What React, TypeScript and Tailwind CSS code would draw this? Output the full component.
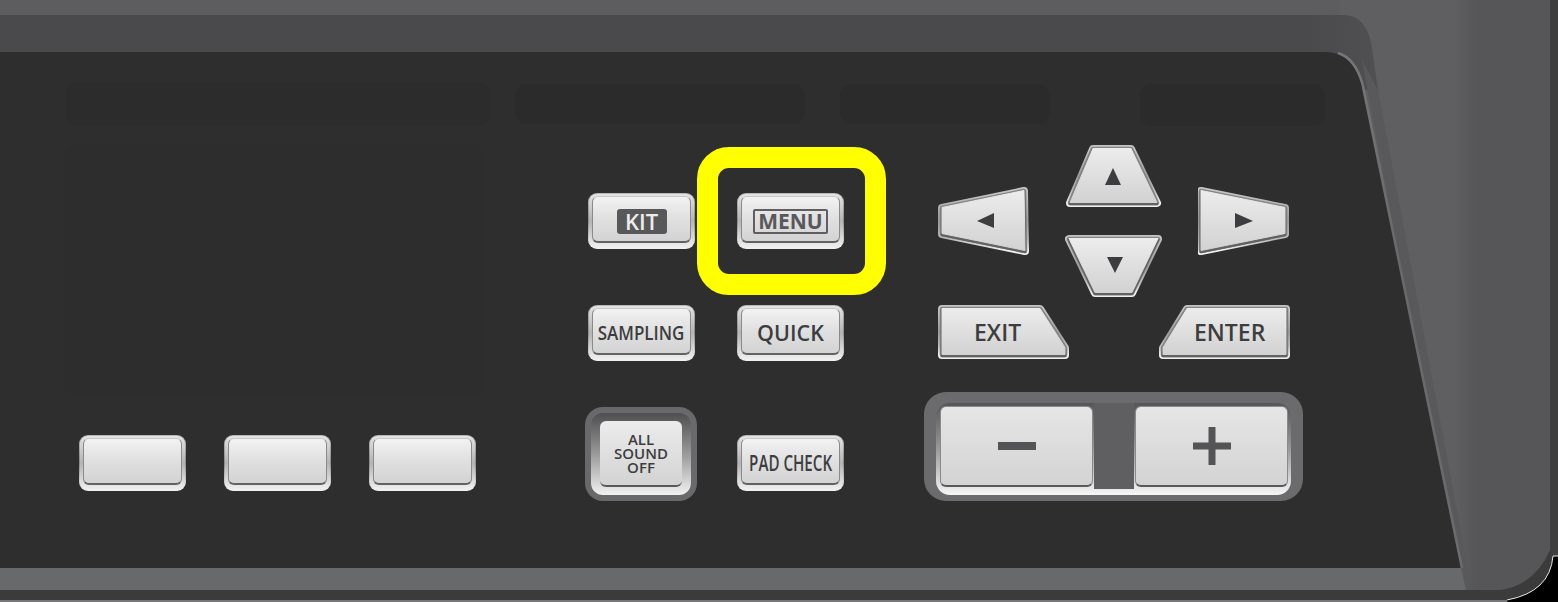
import type { ReactNode } from 'react';

const labelFont = "font-['Open_Sans','Noto_Sans',sans-serif] font-semibold text-[#3d3d40]";

function BodyDrawing() {
  return (
    <svg className="absolute inset-0" width="1558" height="602" viewBox="0 0 1558 602">
      <defs>
        <linearGradient id="keyFace" x1="0" y1="0" x2="0" y2="1">
          <stop offset="0" stopColor="#ececec" />
          <stop offset="0.5" stopColor="#dfdfdf" />
          <stop offset="1" stopColor="#d2d2d3" />
        </linearGradient>
        <linearGradient id="keyRim" x1="0" y1="0" x2="0" y2="1">
          <stop offset="0" stopColor="#c4c4c4" />
          <stop offset="0.5" stopColor="#9c9c9c" />
          <stop offset="0.8" stopColor="#bcbcbc" />
          <stop offset="1" stopColor="#f0f0f0" />
        </linearGradient>
        <linearGradient id="bodySide" x1="0" y1="0" x2="1" y2="0">
          <stop offset="0" stopColor="#5f5f61" />
          <stop offset="0.55" stopColor="#5f5f61" />
          <stop offset="0.65" stopColor="#565658" />
          <stop offset="1" stopColor="#565658" />
        </linearGradient>
        <linearGradient id="topBand" x1="0" y1="0" x2="1" y2="0">
          <stop offset="0" stopColor="#4a4a4c" />
          <stop offset="0.95" stopColor="#4a4a4c" />
          <stop offset="1" stopColor="#505052" />
        </linearGradient>
        <linearGradient id="edgeLight" x1="0" y1="0" x2="0" y2="1">
          <stop offset="0" stopColor="#77777a" />
          <stop offset="0.4" stopColor="#69696b" />
          <stop offset="1" stopColor="#6b6b6d" />
        </linearGradient>
      </defs>
      <rect width="1558" height="602" fill="#5d5d5f" />
      <rect x="1340" width="210" height="602" fill="url(#bodySide)" />
      <rect x="1550" width="8" height="602" fill="#3e3e3f" />
      <path d="M0 15 H1345 Q1365 16 1371 42 L1378 90 L1362 90 H0 Z" fill="url(#topBand)" />
      <path d="M1362 60 L1378 90 L1472 590 H1461 Z" fill="#59595b" />
      <path d="M0 568 H1461 L1466 590 H0 Z" fill="#68696b" />
      <path d="M0 590 H1500 Q1535 585 1550 550 L1553 556 Q1550 592 1507 600 H0 Z" fill="#3b3b3c" />
      <rect y="600" width="1510" height="2" fill="#77777a" />
      <path d="M0 52 H1325 Q1352 52 1362 84 L1461 568 H0 Z" fill="#2f2e2f" />
      <path d="M1338 53 Q1355 58 1362.5 84 L1462 568" fill="none" stroke="url(#edgeLight)" strokeWidth="2.5" />
      <rect x="65" y="82" width="425" height="44" rx="12" fill="#2d2c2d" />
      <rect x="515" y="84" width="290" height="40" rx="12" fill="#2c2b2c" />
      <rect x="840" y="84" width="210" height="40" rx="12" fill="#2c2b2c" />
      <rect x="1140" y="84" width="185" height="42" rx="12" fill="#2c2b2c" />
      <rect x="65" y="145" width="418" height="250" rx="10" fill="#2e2d2e" />
      <path d="M1558 556 H1553 Q1550 592 1507 600 V602 H1558 Z" fill="#000" />
      <path d="M1558 556 H1553 Q1550 592 1507 600" fill="none" stroke="#e8e8e8" strokeWidth="1" />
    </svg>
  );
}

function Key({ children }: { children?: ReactNode }) {
  return (
    <div className="w-[107px] h-[56px] rounded-[9px] bg-gradient-to-b from-[#b8b8b8] via-[#8c8c8c] to-[#f2f2f2] p-[1px]">
      <div className="w-full h-full rounded-[8px] bg-gradient-to-b from-[#e4e4e4] via-[#b4b4b4] to-[#f0f0f0] px-[3px] pt-[2px] pb-[5px]">
        <div className={`w-full h-full rounded-[6px] bg-gradient-to-b from-[#f2f2f2] via-[#e0e0e0] to-[#d3d3d4] border border-[#8a8a8c] border-t-[#c8c8c8] border-b-2 border-b-[#626264] pt-[4px] flex items-center justify-center ${labelFont}`}>
          {children}
        </div>
      </div>
    </div>
  );
}

function ShapeKey({
  width,
  height,
  points,
  triangle,
  children,
}: {
  width: number;
  height: number;
  points: string;
  triangle?: string;
  children?: ReactNode;
}) {
  return (
    <div className="relative shrink-0" style={{ width, height }}>
      <svg className="absolute inset-0" width={width} height={height} viewBox={`0 0 ${width} ${height}`}>
        <polygon points={points} fill="url(#keyRim)" stroke="url(#keyRim)" strokeWidth="8" strokeLinejoin="round" />
        <polygon points={points} fill="#848486" stroke="#848486" strokeWidth="4.5" strokeLinejoin="round" />
        <polygon points={points} fill="#626264" stroke="#626264" strokeWidth="2.5" strokeLinejoin="round" transform="translate(0 1)" />
        <polygon points={points} fill="url(#keyFace)" stroke="url(#keyFace)" strokeWidth="1" strokeLinejoin="round" transform="translate(0 -0.5)" />
        {triangle && <polygon points={triangle} fill="#3d3d40" />}
      </svg>
      {children}
    </div>
  );
}

function SliderFace({ children }: { children: ReactNode }) {
  return (
    <div className="w-[153px] h-[81px] rounded-[6px] bg-gradient-to-b from-[#e6e6e6] to-[#d3d3d4] border border-[#8a8a8c] border-b-2 border-b-[#59595b] flex items-center justify-center">
      {children}
    </div>
  );
}

export default function App() {
  return (
    <div className="relative w-[1558px] h-[602px] overflow-hidden bg-black">
      <BodyDrawing />

      <div className="relative flex pl-[79px] pt-[145px]">
        {/* three unlabelled keys */}
        <div className="flex gap-[38px] pt-[290px] h-fit">
          <Key />
          <Key />
          <Key />
        </div>

        {/* middle block */}
        <div className="ml-[112px] pt-[48px] w-[256px]">
          <div className="grid grid-cols-[107px_107px] gap-x-[42px] gap-y-[56px]">
            <Key>
              <span className="rounded-[3px] bg-[#58585a] w-[50px] h-[25px] flex items-center justify-center text-[22px] leading-none text-[#ececec]">KIT</span>
            </Key>
            <div className="relative">
              <Key>
                <span className="rounded-[2px] border-2 border-[#5f5f62] w-[75px] h-[25px] flex items-center justify-center text-[21px] leading-none font-bold text-[#58585b]">MENU</span>
              </Key>
              <div className="absolute left-[-40px] top-[-46px] w-[189px] h-[148px] rounded-[32px] border-[21px] border-[#ffff00]" />
            </div>
            <Key>
              <span className="inline-block text-[20px] leading-none scale-x-[0.85] whitespace-nowrap">SAMPLING</span>
            </Key>
            <Key>
              <span className="text-[21.5px] leading-none">QUICK</span>
            </Key>
          </div>

          <div className="flex mt-[46px]">
            <div className="-ml-[3px] w-[112px] h-[94px] shrink-0 rounded-[18px] bg-[#69696b] p-[6px]">
              <div className="w-full h-full rounded-[12px] bg-gradient-to-b from-[#4f4f51] via-[#9a9a9a] to-[#f2f2f2] px-[9px] pt-[8px] pb-[8px]">
                <div className={`w-full h-[66px] rounded-[6px] bg-gradient-to-b from-[#ececec] to-[#d3d3d4] border-b-2 border-[#59595b] flex flex-col items-center justify-center text-[15px] leading-[14px] ${labelFont}`}>
                  <span className="block h-[14px]">ALL</span>
                  <span className="block h-[14px]">SOUND</span>
                  <span className="block h-[14px]">OFF</span>
                </div>
              </div>
            </div>
            <div className="ml-[40px] mt-[28px]">
              <Key>
                <span className="inline-block text-[21px] leading-none scale-x-[0.72] whitespace-nowrap">PAD CHECK</span>
              </Key>
            </div>
          </div>
        </div>

        {/* cursor block and value slider */}
        <div className="ml-[80px] w-[379px]">
          <div className="flex pl-[14px]">
            <div className="mt-[41px]">
              <ShapeKey width={91} height={69} points="4,22 86,5 87,65 4,48" triangle="39,35 56,27 56,42" />
            </div>
            <div className="ml-[36px] flex flex-col gap-[27px]">
              <ShapeKey width={97} height={63} points="28,4 66,4 92,58 5,58" triangle="48,23 56,40 40,40" />
              <ShapeKey width={97} height={62} points="4,4 93,4 67,58 30,58" triangle="42,22 58,22 50,38" />
            </div>
            <div className="ml-[36px] mt-[41px]">
              <ShapeKey width={92} height={69} points="3,5 87,22 87,48 3,65" triangle="37,27 55,35 37,42" />
            </div>
          </div>

          <div className="flex justify-between pl-[14px] pr-[13px] mt-[8px]">
            <ShapeKey width={131} height={56} points="4,4 102,4 127,43 127,50 4,50">
              <span className={`absolute left-[36px] top-[13px] text-[23px] leading-[28px] ${labelFont}`}>EXIT</span>
            </ShapeKey>
            <ShapeKey width={132} height={56} points="29,4 128,4 128,50 5,50 5,43">
              <span className={`absolute left-[36px] top-[13px] text-[23px] leading-[28px] ${labelFont}`}>ENTER</span>
            </ShapeKey>
          </div>

          <div className="mt-[31px] h-[109px] rounded-[22px] bg-[#6b6b6d] px-[12px] pt-[11px] pb-[6px]">
            <div className="h-full rounded-[14px] bg-gradient-to-b from-[#565658] via-[#9a9a9a] to-[#f6f6f6] pl-[4px] pt-[3px] flex">
              <SliderFace>
                <div className="w-[38px] h-[8px] bg-[#545456]" />
              </SliderFace>
              <div className="w-[40px] h-[86px] -mt-[3px] mx-[1px] bg-[#5f5f61] shrink-0" />
              <SliderFace>
                <svg width="40" height="40" viewBox="0 0 40 40">
                  <path d="M16.5 1h7v15.5H39v7H23.5V39h-7V23.5H1v-7h15.5z" fill="#545456" />
                </svg>
              </SliderFace>
            </div>
          </div>
        </div>
      </div>
    </div>
  );
}
